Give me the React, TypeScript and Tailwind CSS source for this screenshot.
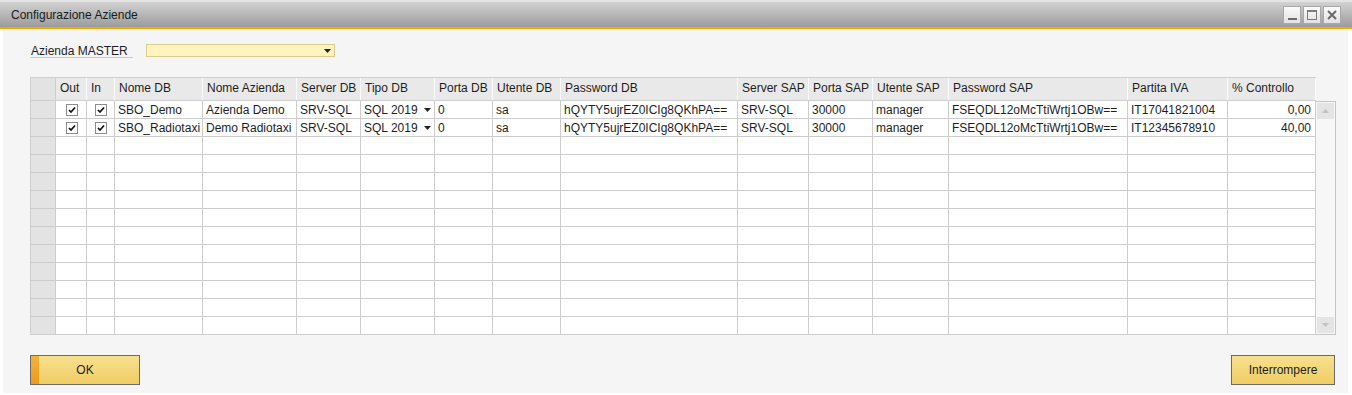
import React from "react";

const cols: { label: string; w: string }[] = [
  { label: "Out", w: "w-[31px]" },
  { label: "In", w: "w-[28px]" },
  { label: "Nome DB", w: "w-[88px]" },
  { label: "Nome Azienda", w: "w-[94px]" },
  { label: "Server DB", w: "w-[64px]" },
  { label: "Tipo DB", w: "w-[74px]" },
  { label: "Porta DB", w: "w-[58px]" },
  { label: "Utente DB", w: "w-[68px]" },
  { label: "Password DB", w: "w-[177px]" },
  { label: "Server SAP", w: "w-[71px]" },
  { label: "Porta SAP", w: "w-[64px]" },
  { label: "Utente SAP", w: "w-[76px]" },
  { label: "Password SAP", w: "w-[179px]" },
  { label: "Partita IVA", w: "w-[100px]" },
  { label: "% Controllo", w: "w-[88px]" },
];

const rows = [
  ["SBO_Demo", "Azienda Demo", "SRV-SQL", "SQL 2019", "0", "sa", "hQYTY5ujrEZ0ICIg8QKhPA==", "SRV-SQL", "30000", "manager", "FSEQDL12oMcTtiWrtj1OBw==", "IT17041821004", "0,00"],
  ["SBO_Radiotaxi", "Demo Radiotaxi", "SRV-SQL", "SQL 2019", "0", "sa", "hQYTY5ujrEZ0ICIg8QKhPA==", "SRV-SQL", "30000", "manager", "FSEQDL12oMcTtiWrtj1OBw==", "IT12345678910", "40,00"],
];

function Check() {
  return (
    <span className="flex h-[12px] w-[12px] items-center justify-center border border-[#8c8c8c] bg-white">
      <svg width="10" height="10" viewBox="0 0 10 10">
        <path d="M2 5 L4 7 L8 2.5" stroke="#111" strokeWidth="1.7" fill="none" />
      </svg>
    </span>
  );
}

function DownTri({ color = "#222" }: { color?: string }) {
  return (
    <svg width="7" height="4" viewBox="0 0 7 4">
      <path d="M0 0 L7 0 L3.5 4 Z" fill={color} />
    </svg>
  );
}

export default function App() {
  const emptyRows = Array.from({ length: 11 });
  return (
    <div className="flex h-[395px] w-[1352px] flex-col bg-white font-['Liberation_Sans',Arial,sans-serif] text-[12px] text-[#1e1e1e]">
      {/* title bar */}
      <div className="flex h-[27px] items-center justify-between border-t-[2px] border-t-[#e4e4e4] bg-gradient-to-b from-[#d2d2d2] to-[#9c9c9c] pl-[11px] pr-[11px]">
        <span className="text-[12px] text-[#1a1a1a]">Configurazione Aziende</span>
        <div className="flex gap-[2px]">
          <div className="flex h-[18px] w-[18px] items-end justify-center border border-[#a8a8a8] bg-gradient-to-b from-[#fafafa] to-[#e2e2e2] pb-[3px]">
            <div className="h-[2px] w-[9px] bg-[#6a6a6a]" />
          </div>
          <div className="flex h-[18px] w-[18px] items-center justify-center border border-[#a8a8a8] bg-gradient-to-b from-[#fafafa] to-[#e2e2e2]">
            <div className="h-[10px] w-[10px] border border-[#7a7a7a] border-t-2" />
          </div>
          <div className="flex h-[18px] w-[18px] items-center justify-center border border-[#a8a8a8] bg-gradient-to-b from-[#fafafa] to-[#e2e2e2]">
            <svg width="10" height="10" viewBox="0 0 10 10">
              <path d="M1 1 L9 9 M9 1 L1 9" stroke="#6a6a6a" strokeWidth="2" />
            </svg>
          </div>
        </div>
      </div>
      <div className="h-[2px] bg-[#f0ab00]" />

      {/* body */}
      <div className="ml-[3px] mr-[4px] mb-[2px] flex flex-1 flex-col bg-[#f5f5f5] pl-[27px] pt-[15px]">
        <div className="flex h-[13px] items-center">
          <span className="flex h-[14px] w-[103px] items-center border-b border-[#c9c9c9] pl-[1px] pt-[1px]">Azienda MASTER</span>
          <div className="ml-[13px] flex h-[13px] w-[189px] items-center justify-end border border-[#dccb8c] bg-[#fff3be] pr-[3px]">
            <DownTri />
          </div>
        </div>

        {/* table */}
        <div className="mt-[20px] flex flex-col">
          <div className="flex h-[24px] w-[1286px] border-y border-[#cfcfcf] bg-[#e9e9e9]">
            <div className="w-[26px] border-x border-[#cfcfcf] bg-[#e3e3e3]" />
            {cols.map((c) => (
              <div key={c.label} className={`${c.w} flex items-center border-r border-[#fbfbfb] pb-[2px] pl-[4px] whitespace-nowrap`}>
                {c.label}
              </div>
            ))}
          </div>
          <div className="flex">
            <div className="flex w-[1286px] flex-col">
              {rows.map((r, i) => (
                <div key={i} className="flex h-[18px] border-b border-[#cdcdcd] bg-white">
                  <div className="w-[26px] border-x border-[#cdcdcd] bg-[#e3e3e3]" />
                  <div className="flex w-[31px] items-center justify-center border-r border-[#cdcdcd] pl-[1px]">
                    <Check />
                  </div>
                  <div className="flex w-[28px] items-center justify-center border-r border-[#cdcdcd]">
                    <Check />
                  </div>
                  {r.map((v, j) => {
                    const c = cols[j + 2];
                    const right = j === r.length - 1;
                    return (
                      <div
                        key={j}
                        className={`${c.w} flex items-center border-r border-[#cdcdcd] whitespace-nowrap ${right ? "justify-end pr-[4px]" : "pl-[3px]"} ${j === 3 ? "justify-between pr-[3px]" : ""}`}
                      >
                        <span>{v}</span>
                        {j === 3 && <DownTri />}
                      </div>
                    );
                  })}
                </div>
              ))}
              {emptyRows.map((_, i) => (
                <div key={i} className="flex h-[18px] border-b border-[#cdcdcd] bg-white">
                  <div className="w-[26px] border-x border-[#cdcdcd] bg-[#e3e3e3]" />
                  {cols.map((c) => (
                    <div key={c.label} className={`${c.w} border-r border-[#cdcdcd]`} />
                  ))}
                </div>
              ))}
            </div>
            {/* scrollbar */}
            <div className="flex w-[20px] flex-col justify-between border border-l-0 border-[#c4c4c4] bg-[#f7f7f7]">
              <div className="m-[1px] flex h-[16px] w-[17px] items-center justify-center bg-[#e4e4e4]">
                <svg width="7" height="4" viewBox="0 0 7 4">
                  <path d="M0 4 L7 4 L3.5 0 Z" fill="#c2c2c2" />
                </svg>
              </div>
              <div className="m-[1px] flex h-[16px] w-[17px] items-center justify-center bg-[#e4e4e4]">
                <DownTri color="#c2c2c2" />
              </div>
            </div>
          </div>
        </div>

        {/* buttons */}
        <div className="mt-[20px] flex w-[1305px] justify-between">
          <button className="relative flex h-[30px] w-[110px] items-center justify-center border border-[#6b6b6b] bg-gradient-to-b from-[#f8e08e] to-[#f0cd62] text-[12px] text-[#1e1e1e]">
            <span className="absolute left-0 top-0 h-full w-[8px] bg-gradient-to-b from-[#f5b23a] to-[#ec9a1a]" />
            <span className="ml-[0px]">OK</span>
          </button>
          <button className="flex h-[30px] w-[104px] items-center justify-center border border-[#6b6b6b] bg-gradient-to-b from-[#f8e08e] to-[#f0cd62] text-[12px] text-[#1e1e1e]">
            Interrompere
          </button>
        </div>
      </div>
    </div>
  );
}
